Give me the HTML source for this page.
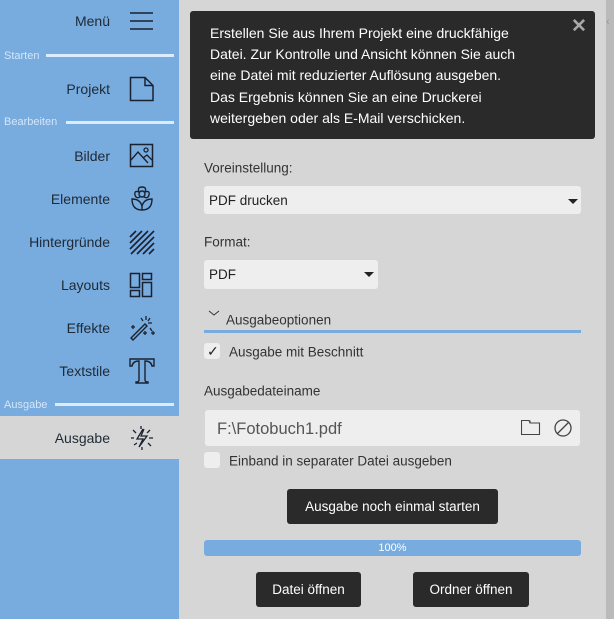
<!DOCTYPE html>
<html><head><meta charset="utf-8"><style>
*{margin:0;padding:0;box-sizing:border-box}
body{width:614px;height:619px;overflow:hidden;background:#d6d6d6;font-family:"Liberation Sans",sans-serif;position:relative;color:#222}
.a{position:absolute}
#side{left:0;top:0;width:179px;height:619px;background:#78abde}
.it{position:absolute;right:69px;font-size:14px;color:#1e2a36;transform:translateY(-50%)}
.sec{position:absolute;left:4px;font-size:11px;color:#d4e6fa;transform:translateY(-50%)}
.ln{position:absolute;height:3px;background:#dcecff;right:5px}
.ic{position:absolute;left:128px}
.dark{background:#2a2a2a;color:#fff;border-radius:3px}
.lbl{position:absolute;left:204px;font-size:13.5px;color:#333;transform:translateY(-50%)}
.sel{position:absolute;background:#eeeeee;border-radius:3px;font-size:13.5px;padding-left:5px;display:flex;align-items:center}
.tri{position:absolute;width:0;height:0;border-left:5px solid transparent;border-right:5px solid transparent;border-top:5px solid #222}
.btn{position:absolute;background:#2a2a2a;color:#fff;border-radius:3px;font-size:13.5px;display:flex;align-items:center;justify-content:center}
.cb{position:absolute;width:16px;height:16px;background:#eee;border-radius:3px}
</style></head><body>
<div id="side" class="a">
<div class="it" style="top:21px">Menü</div>
<svg class="ic" style="top:10px" width="28" height="22"><path d="M2 3H25M2 11H25M2 19H25" stroke="#1a2230" stroke-width="1.6"/></svg>
<div class="sec" style="top:56px">Starten</div><div class="ln" style="left:46px;top:54px"></div>
<div class="it" style="top:89px">Projekt</div>
<svg class="ic" style="top:76px" width="28" height="26"><path d="M2.5 1.5H17L25 9.5V24.5H2.5Z M17 1.5V9.5H25" fill="none" stroke="#1a2230" stroke-width="1.5"/></svg>
<div class="sec" style="top:122px">Bearbeiten</div><div class="ln" style="left:66px;top:121px"></div>
<div class="it" style="top:156px">Bilder</div>
<svg class="ic" style="top:143px" width="28" height="26"><rect x="2.5" y="1.5" width="22" height="22" fill="none" stroke="#1a2230" stroke-width="1.5"/><path d="M3 17L10 9L20 20M15 15L19 12L24 17" fill="none" stroke="#1a2230" stroke-width="1.4"/><circle cx="18" cy="7" r="2" fill="none" stroke="#1a2230" stroke-width="1.3"/></svg>
<div class="it" style="top:199px">Elemente</div>
<svg class="ic" style="top:186px" width="28" height="26"><circle cx="14" cy="8" r="3" fill="none" stroke="#1a2230" stroke-width="1.4"/><path d="M11 6Q9 1 14 1Q19 1 17 6M17 6Q22 4 21 9Q20 13 16 11M12 11Q8 13 7 9Q6 4 11 6" fill="none" stroke="#1a2230" stroke-width="1.4"/><path d="M4 13Q4 24 14 24Q24 24 24 13Q16 13 14 20Q12 13 4 13Z M14 20V24" fill="none" stroke="#1a2230" stroke-width="1.4"/></svg>
<div class="it" style="top:242px">Hintergründe</div>
<svg class="ic" style="top:229px" width="28" height="26"><path d="M2 8L8 2M2 14L14 2M2 20L20 2M3 25L26 2M9 25L26 8M15 25L26 14M21 25L26 20" stroke="#1a2230" stroke-width="1.6"/></svg>
<div class="it" style="top:285px">Layouts</div>
<svg class="ic" style="top:272px" width="28" height="26"><rect x="2.5" y="1.5" width="9" height="14" fill="none" stroke="#1a2230" stroke-width="1.5"/><rect x="2.5" y="18.5" width="9" height="6" fill="none" stroke="#1a2230" stroke-width="1.5"/><rect x="14.5" y="1.5" width="9" height="6" fill="none" stroke="#1a2230" stroke-width="1.5"/><rect x="14.5" y="10.5" width="9" height="14" fill="none" stroke="#1a2230" stroke-width="1.5"/></svg>
<div class="it" style="top:328px">Effekte</div>
<svg class="ic" style="top:314px" width="30" height="28"><path d="M3 24L17 10L19 12L5 26Z" fill="none" stroke="#1a2230" stroke-width="1.4"/><path d="M18 2V6M22 4L20 7M24 9H20M13 4L15 7M22 14L24 17M3 13H7M5 11V15M15 19H19M17 17V21M23 19H27M25 17V21" stroke="#1a2230" stroke-width="1.3"/></svg>
<div class="it" style="top:371px">Textstile</div>
<svg class="ic" style="top:357px" width="30" height="28"><path d="M2 2H26V9H24Q23 4 17 4V23Q17 25 20 25V26H8V25Q11 25 11 23V4Q5 4 4 9H2Z" fill="none" stroke="#1a2230" stroke-width="1.4"/></svg>
<div class="sec" style="top:405px">Ausgabe</div><div class="ln" style="left:55px;top:403px"></div>
<div class="a" style="left:0;top:416px;width:179px;height:43px;background:#d6d6d6"></div>
<div class="it" style="top:438px">Ausgabe</div>
<svg class="ic" style="top:426px" width="28" height="24"><path d="M15 3L9 13H15L11 21L19 10H13L16 3" fill="none" stroke="#1a2230" stroke-width="1.3"/><path d="M13 0V3M5 4L8 7M22 4L19 7M3 12H6M21 12H25M6 19L9 17M20 17L23 20M14 21V24" stroke="#1a2230" stroke-width="1.3"/></svg>
</div>
<div class="a" style="left:606px;top:0;width:8px;height:619px;background:#bababa"></div>
<div class="a" style="left:606px;top:16px;font-size:11px;color:#999">&lsaquo;</div>

<div class="a dark" style="left:190px;top:11px;width:405px;height:128px;font-size:14px;line-height:21.2px;padding:12px 0 0 20px">Erstellen Sie aus Ihrem Projekt eine druckfähige<br>Datei. Zur Kontrolle und Ansicht können Sie auch<br>eine Datei mit reduzierter Auflösung ausgeben.<br>Das Ergebnis können Sie an eine Druckerei<br>weitergeben oder als E-Mail verschicken.</div>
<div class="a" style="left:571px;top:15px;font-size:19px;font-weight:bold;color:#a8a8a8">✕</div>

<div class="lbl" style="top:168px">Voreinstellung:</div>
<div class="sel" style="left:204px;top:186px;width:377px;height:28px">PDF drucken</div>
<div class="tri" style="left:568px;top:199px"></div>
<div class="lbl" style="top:242px">Format:</div>
<div class="sel" style="left:204px;top:260px;width:174px;height:29px">PDF</div>
<div class="tri" style="left:364px;top:272px"></div>

<svg class="a" style="left:208px;top:310px" width="12" height="8"><path d="M1 1L6 5L11 1" fill="none" stroke="#333" stroke-width="1"/></svg>
<div class="lbl" style="left:226px;top:320px">Ausgabeoptionen</div>
<div class="a" style="left:204px;top:330px;width:377px;height:3px;background:#78abde"></div>
<div class="cb" style="left:204px;top:343px"></div>
<div class="a" style="left:207px;top:343px;font-size:14px;color:#222">✓</div>
<div class="lbl" style="left:229px;top:352px">Ausgabe mit Beschnitt</div>
<div class="lbl" style="top:391px">Ausgabedateiname</div>
<div class="a" style="left:205px;top:410px;width:375px;height:36px;background:#eee;border-radius:3px"></div>
<div class="a" style="left:217px;top:420px;font-size:16.5px;color:#555">F:\Fotobuch1.pdf</div>
<svg class="a" style="left:521px;top:419px" width="20" height="17"><path d="M0.5 1.5H8L9 4H18.5V15.5H0.5Z M9 4V1.5" fill="none" stroke="#444" stroke-width="1.1"/></svg>
<svg class="a" style="left:553px;top:418px" width="20" height="20"><circle cx="10" cy="10" r="8" fill="none" stroke="#444" stroke-width="1.3"/><path d="M4.5 15.5L15.5 4.5" stroke="#444" stroke-width="1.3"/></svg>
<div class="cb" style="left:204px;top:452px"></div>
<div class="lbl" style="left:229px;top:461px">Einband in separater Datei ausgeben</div>
<div class="btn" style="left:287px;top:489px;width:211px;height:35px">Ausgabe noch einmal starten</div>
<div class="a" style="left:204px;top:540px;width:377px;height:16px;background:#78abde;border-radius:3px;color:#fff;font-size:11px;text-align:center;line-height:16px">100%</div>
<div class="btn" style="left:256px;top:572px;width:105px;height:35px">Datei öffnen</div>
<div class="btn" style="left:413px;top:572px;width:116px;height:35px">Ordner öffnen</div>
</body></html>
